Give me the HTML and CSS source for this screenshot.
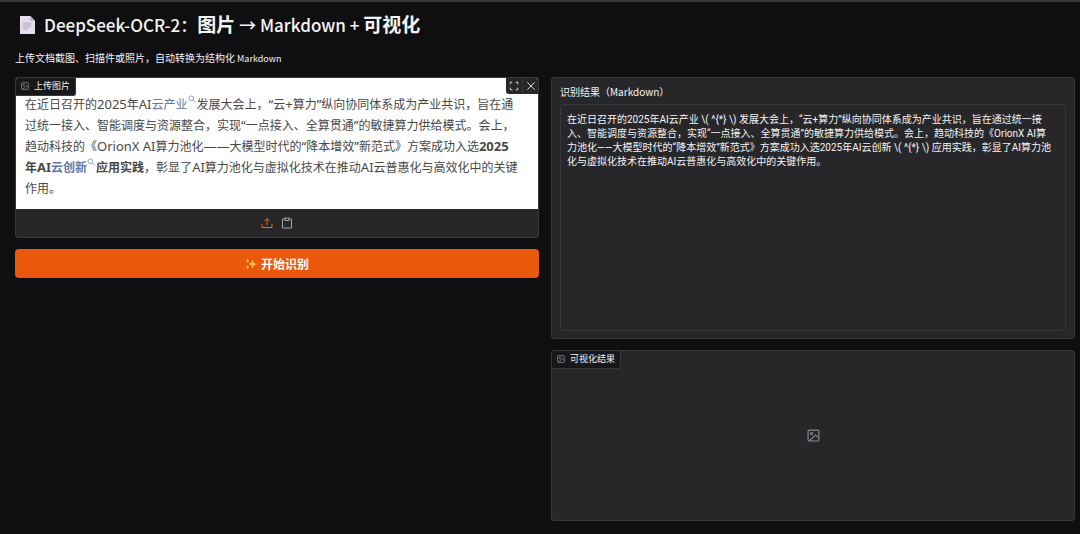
FILE: index.html
```html
<!DOCTYPE html>
<html lang="zh-CN">
<head>
<meta charset="utf-8">
<meta name="viewport" content="width=device-width, initial-scale=1">
<title>DeepSeek-OCR-2</title>
<link rel="stylesheet" href="styles.css">
</head>
<body>
<svg class="defs" aria-hidden="true">
  <symbol id="image" viewBox="0 0 24 24"><rect x="2" y="2" width="20" height="20" rx="2"/><circle cx="8.5" cy="8.5" r="2"/><path d="M21 16l-5-5L4 22"/></symbol>
  <symbol id="search" viewBox="0 0 24 24"><circle cx="10" cy="10" r="7"/><path d="M15 15l7 7"/></symbol>
</svg>
<main class="app">
  <header class="intro">
    <h1 class="title">
      <svg class="doc" viewBox="0 0 16 19" aria-hidden="true"><path d="M0 0h11l5 5v14H0z" fill="#e6dcef"/><path d="M11 0l5 5h-5z" fill="#b9acc6"/><path d="M3 7.5h9M3 9.5h9M3 11.5h9M3 13.5h6" stroke="#b5a8c0" stroke-width="1"/></svg>
      <span>DeepSeek-OCR-2：<b>图片</b> → Markdown + <b>可视化</b></span>
    </h1>
    <p class="subtitle">上传文档截图、扫描件或照片，自动转换为结构化<span class="small"> Markdown</span></p>
  </header>
  <div class="columns">
    <section class="column">
      <div class="panel upload">
        <span class="tag"><svg class="icon tag-icon"><use href="#image"/></svg>上传图片</span>
        <div class="tools">
          <button class="tool" type="button" aria-label="全屏"><svg class="icon" viewBox="0 0 24 24"><path d="M8 3H3v5M16 3h5v5M21 16v5h-5M3 16v5h5"/></svg></button>
          <button class="tool" type="button" aria-label="清除"><svg class="icon" viewBox="0 0 24 24"><path d="M3 3l18 18M21 3L3 21"/></svg></button>
        </div>
        <div class="preview">
          在近日召开的<span class="latin">2025</span>年<span class="latin">AI</span><a class="term" href="#">云产业<svg class="icon search"><use href="#search"/></svg></a>发展大会上，<span class="latin">“</span>云<span class="latin">+</span>算力<span class="latin">”</span>纵向协同体系成为产业共识，旨在通<br>过统一接入、智能调度与资源整合，实现<span class="latin">“</span>一点接入、全算贯通<span class="latin">”</span>的敏捷算力供给模式。会上，<br>趋动科技的《<span class="latin">OrionX AI</span>算力池化<span class="latin">——</span>大模型时代的<span class="latin">“</span>降本增效<span class="latin">”</span>新范式》方案成功入选<b><span class="latin">2025</span></b><br><b>年<span class="latin">AI</span><a class="term" href="#">云创新<svg class="icon search"><use href="#search"/></svg></a>应用实践</b>，彰显了<span class="latin">AI</span>算力池化与虚拟化技术在推动<span class="latin">AI</span>云普惠化与高效化中的关键<br>作用。
        </div>
        <div class="sources">
          <button class="source active" type="button" aria-label="上传"><svg class="icon" viewBox="0 0 24 24"><path d="M2 14v7h20v-7M12 16V3M7 8l5-5 5 5"/></svg></button>
          <button class="source" type="button" aria-label="粘贴"><svg class="icon" viewBox="0 0 24 24"><path d="M8 4H3v18h18V4h-5"/><rect x="8" y="2" width="8" height="5"/></svg></button>
        </div>
      </div>
      <button class="run" type="button"><svg class="sparkles" viewBox="0 0 24 24" aria-hidden="true"><path d="M15 2q1 9 9 10q-8 1-9 10q-1-9-9-10q8-1 9-10z" fill="#ffc34d"/><path d="M5 1q.5 4 4 4.500q-3.500.5-4 4.500q-.5-4-4-4.500q3.500-.5 4-4.500zM5 14q.5 4 4 4.500q-3.500.5-4 4.500q-.5-4-4-4.500q3.500-.5 4-4.500z" fill="#ffac6b"/></svg>开始识别</button>
    </section>
    <section class="column">
      <div class="panel result">
        <label class="label" for="markdown">识别结果（Markdown）</label>
        <textarea class="markdown" id="markdown" spellcheck="false">在近日召开的2025年AI云产业 \( ^{*} \) 发展大会上，“云+算力”纵向协同体系成为产业共识，旨在通过统一接入、智能调度与资源整合，实现“一点接入、全算贯通”的敏捷算力供给模式。会上，趋动科技的《OrionX AI算力池化——大模型时代的“降本增效”新范式》方案成功入选2025年AI云创新 \( ^{*} \) 应用实践，彰显了AI算力池化与虚拟化技术在推动AI云普惠化与高效化中的关键作用。</textarea>
      </div>
      <div class="panel visual">
        <span class="tag"><svg class="icon tag-icon"><use href="#image"/></svg>可视化结果</span>
        <svg class="icon placeholder"><use href="#image"/></svg>
      </div>
    </section>
  </div>
</main>
</body>
</html>
```
FILE: styles.css
```css
* { box-sizing: border-box; }
body {
  margin: 0;
  background: #0f0f11;
  color: #f4f4f5;
  font-family: "Noto Sans CJK SC", sans-serif;
  font-size: 10px;
  line-height: 14px;
}
button { padding: 0; border: 0; background: none; color: inherit; font: inherit; cursor: pointer; }
.defs { position: absolute; width: 0; height: 0; }
.icon { fill: none; stroke: currentColor; stroke-width: 2; }
.app { border-top: 2px solid #38383b; padding: 10px 5px 12px 15px; }
.title { display: flex; align-items: center; gap: 9px; margin: 0; padding-left: 5px; font-size: 17px; line-height: 26px; font-weight: 500; }
.title b { font-size: 19px; line-height: 1; font-weight: 700; }
.doc { width: 15px; height: 18px; }
.subtitle { margin: 12px 0; line-height: 15px; }
.small { font-size: 9px; line-height: 1; }
.columns { display: grid; grid-template-columns: 1fr 1fr; gap: 12px; }
.column { display: flex; flex-direction: column; gap: 11px; }
.panel { position: relative; border: 1px solid #38383c; border-radius: 3px; background: #27272a; overflow: hidden; }
.tag {
  position: absolute; top: 0; left: 0;
  display: flex; align-items: center; gap: 5px;
  padding: 1px 5px 2px;
  border: solid #38383c; border-width: 0 1px 1px 0; border-radius: 0 0 3px 0;
  background: #18181b; font-size: 9px;
}
.tag-icon { width: 8px; height: 8px; color: #a1a1aa; }
.tools { position: absolute; top: 0; right: 0; display: flex; height: 16px; background: #27272a; border-radius: 0 0 0 3px; }
.tool { display: grid; place-items: center; width: 16px; }
.tool + .tool { border-left: 1px solid #38383c; }
.tool .icon { width: 10px; height: 10px; }
.preview { padding: 16px 9px 10px; background: #fff; color: #484848; font-family: "Noto Sans", "Noto Sans CJK SC", sans-serif; font-size: 12px; line-height: 21px; white-space: nowrap; }
.latin { font-size: 13px; line-height: 1; }
.term { color: #6478aa; text-decoration: none; }
.search { width: 8px; height: 8px; vertical-align: 6px; margin-right: 1px; }
.sources { display: flex; justify-content: center; align-items: center; gap: 8px; height: 28px; color: #a1a1aa; }
.source { display: flex; }
.source .icon { width: 12px; height: 12px; }
.active { color: #ea6a1c; }
.run { display: flex; justify-content: center; align-items: center; gap: 4px; height: 29px; border-radius: 4px; background: #ea580c; color: #fff; font-size: 12px; font-weight: 700; }
.sparkles { width: 12px; height: 12px; }
.result { display: flex; flex-direction: column; padding: 7px 8px; }
.label { margin-bottom: 5px; }
.markdown {
  display: block; width: 100%; height: 227px; padding: 8px 12px 8px 6px;
  border: 1px solid #38383c; border-radius: 3px; background: transparent;
  color: inherit; font: inherit; font-family: Roboto, "Noto Sans CJK SC", sans-serif; resize: none; outline: 0;
}
.visual { display: grid; place-items: center; height: 171px; }
.placeholder { width: 13px; height: 13px; color: #8b8b93; }
```
